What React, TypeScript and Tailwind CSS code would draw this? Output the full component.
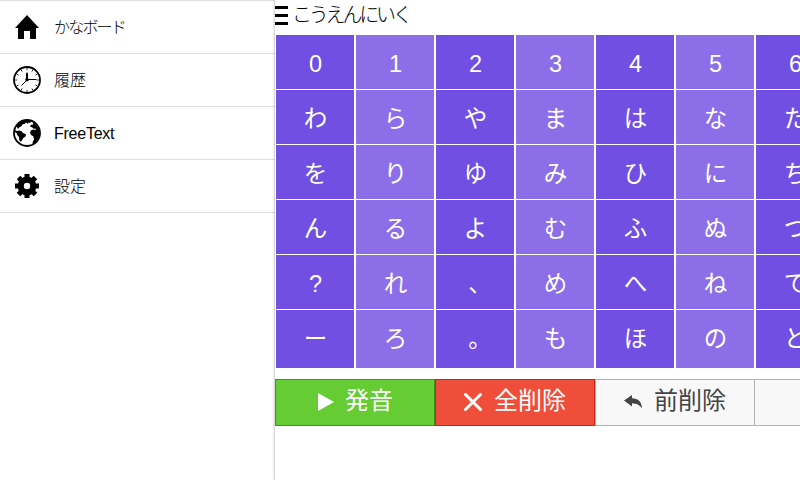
import type { ReactNode } from 'react';

function HomeIcon() {
  return (
    <svg viewBox="0 0 28 28" className="size-7" fill="#000">
      <path d="M14 2 2 15h3v11h6v-8h6v8h6V15h3z" />
    </svg>
  );
}

function ClockIcon() {
  const ticks = [0, 30, 60, 90, 120, 150, 180, 210, 240, 270, 300, 330];
  return (
    <svg viewBox="0 0 28 28" className="size-7" fill="none" stroke="#000">
      <circle cx="14" cy="14" r="13" strokeWidth="1.8" />
      {ticks.map((a) => (
        <path key={a} d="M14 2v2.2" strokeWidth="0.8" transform={`rotate(${a} 14 14)`} />
      ))}
      <path d="M14 13.500h9.5M14 14l-5.5 5.5" strokeWidth="1" />
      <path d="m14 6 1 1.500v6.500h-2V7.500z" fill="#000" stroke="none" />
      <circle cx="14" cy="13.800" r="1.800" fill="#000" stroke="none" />
    </svg>
  );
}

function EarthIcon() {
  return (
    <svg viewBox="0 0 28 28" className="size-7">
      <circle cx="14" cy="14" r="13" fill="#fff" stroke="#000" strokeWidth="1.8" />
      <path d="M3.500 7 7 3.500l4-2.300 4-.5 3 1.500-1 2-1.500-.8-1 1.300-1.500-1.200-1.500 1.500-2 .3-1 2-2 1L5 10zM1.500 11l2.500 1 2.500-.6 2.500 1 1 1.600 3 1.200-.5 2.300-2.300 1.500-1.200 2.500-1.800 1.300-1-1.800-.2-3-1.800-2-.7-2L1.500 13z" />
      <path d="m17 7.500 1-2 1.500.5 1-2.500 3.500 3 2.200 4 .5 5-1.500 4.500-3 3.600-2.700 1.400.2-2 1.300-2.500-.6-3-2.200-1.500-1.200-2.200 1-2.600 2.500-.7 2.500.8-.7-1.800-1.800.2-1.200-1.200z" />
    </svg>
  );
}

function GearIcon() {
  const teeth = [0, 45, 90, 135];
  return (
    <svg viewBox="0 0 28 28" className="size-7">
      {teeth.map((a) => (
        <path key={a} d="M11.500 2h5v24h-5z" transform={`rotate(${a} 14 14)`} />
      ))}
      <circle cx="14" cy="14" r="9.400" />
      <circle cx="14" cy="14" r="3.200" fill="#fff" />
    </svg>
  );
}

function MenuItem({ icon, children }: { icon: ReactNode; children: ReactNode }) {
  return (
    <li className="flex h-[53px] items-center border-t border-[#ddd] pl-[13px]">
      {icon}
      <span className="ml-[13px] pt-px text-base leading-5 whitespace-nowrap">{children}</span>
    </li>
  );
}

const columns = [
  ['0', 'わ', 'を', 'ん', '?', 'ー'],
  ['1', 'ら', 'り', 'る', 'れ', 'ろ'],
  ['2', 'や', 'ゆ', 'よ', '、', '。'],
  ['3', 'ま', 'み', 'む', 'め', 'も'],
  ['4', 'は', 'ひ', 'ふ', 'へ', 'ほ'],
  ['5', 'な', 'に', 'ぬ', 'ね', 'の'],
  ['6', 'た', 'ち', 'つ', 'て', 'と'],
];

function KanaBoard() {
  return (
    <div className="mt-[35px] flex gap-[2px] pl-px">
      {columns.map((keys, i) => (
        <div key={keys[0]} className="flex w-[78px] shrink-0 flex-col gap-px">
          {keys.map((key, row) => (
            <button
              key={key}
              className={`flex justify-center pt-[13px] text-[23.500px] leading-8 text-white ${row === 5 ? 'h-[58px]' : 'h-[54px]'} ${
                i % 2 ? 'bg-[#8b6ee8]' : 'bg-[#714fe3]'
              } ${key === '、' || key === '。' ? 'pl-[10px]' : 'pl-px'}`}
            >
              {key}
            </button>
          ))}
        </div>
      ))}
    </div>
  );
}

export default function App() {
  return (
    <div className="flex h-[480px] w-[800px] overflow-hidden bg-white font-['Liberation_Sans','Noto_Sans_CJK_JP',sans-serif] text-black">
      <nav className="w-[275px] shrink-0">
        <ul className="border-b border-[#ddd]">
          <MenuItem icon={<HomeIcon />}>
            <span className="font-light tracking-[-1.800px]">かなボード</span>
          </MenuItem>
          <MenuItem icon={<ClockIcon />}>
            <span className="font-light">履歴</span>
          </MenuItem>
          <MenuItem icon={<EarthIcon />}>
            <span className="tracking-[-0.250px]">FreeText</span>
          </MenuItem>
          <MenuItem icon={<GearIcon />}>
            <span className="font-light">設定</span>
          </MenuItem>
        </ul>
      </nav>
      <main className="relative w-[525px] shrink-0 bg-white shadow-[-1px_0_2px_rgba(0,0,0,0.2),1px_0_2px_rgba(0,0,0,0.2)]">
        <header className="absolute top-0 left-0 flex h-[35px] items-start">
          <svg viewBox="0 0 13 19" className="mt-[6px] h-[19px] w-[13px]">
            <path d="M0 0h13v3H0zM0 8h13v3H0zM0 16h13v3H0z" />
          </svg>
          <span className="ml-[4px] pt-px text-xl leading-7 font-light tracking-[-3.200px] whitespace-nowrap">こうえんにいく</span>
        </header>
        <KanaBoard />
        <div className="mt-[11px] flex h-[47px] text-2xl leading-[42px]">
          <button className="flex w-40 shrink-0 border border-[#498f24] bg-[#66cc33] pl-[42px] text-white">
            <svg viewBox="0 0 16 18" className="mt-[13px] h-[18px] w-4" fill="currentColor">
              <path d="M0 0v18l16-9z" />
            </svg>
            <span className="ml-[11px]">発音</span>
          </button>
          <button className="flex w-40 shrink-0 border border-[#cc2311] bg-[#ef4e3a] pl-[28px] text-white">
            <svg viewBox="0 0 18 18" className="mt-[13px] size-[18px]" stroke="currentColor" strokeWidth="3" strokeLinecap="round">
              <path d="m1.500 1.500 15 15m0-15-15 15" />
            </svg>
            <span className="ml-[12px]">全削除</span>
          </button>
          <button className="flex w-[159px] shrink-0 border border-r-0 border-[#b2b2b2] bg-[#f8f8f8] pl-[28px] text-[#444]">
            <svg viewBox="0 0 18 14" className="mt-[15px] h-[14px] w-[18px]" fill="currentColor">
              <path d="M0 5.500 8 0v3.200c6 0 9.800 3.500 10 10.300C15.500 9.800 12.500 8.500 8 8.300V11.500z" />
            </svg>
            <span className="ml-[12px]">前削除</span>
          </button>
          <div className="w-[46px] shrink-0 border border-r-0 border-[#b2b2b2] bg-[#f8f8f8]" />
        </div>
      </main>
    </div>
  );
}
